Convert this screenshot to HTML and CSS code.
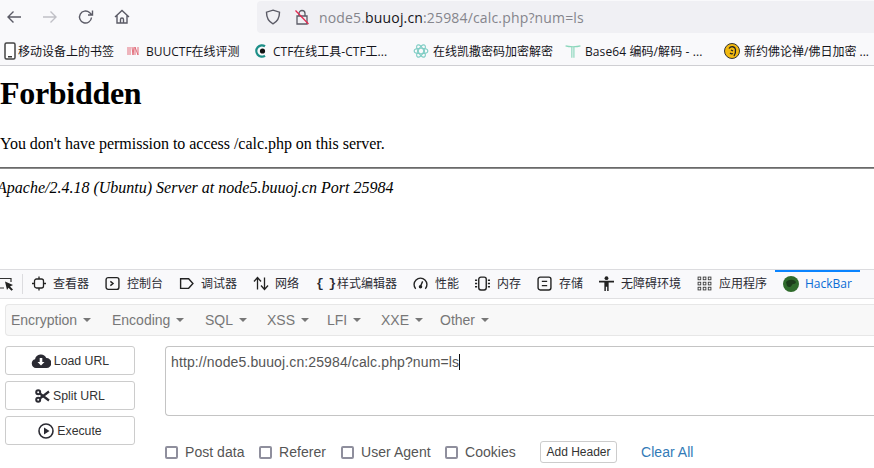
FILE: index.html
```html
<!DOCTYPE html>
<html lang="zh">
<head>
<meta charset="utf-8">
<title>403 Forbidden</title>
<link rel="stylesheet" href="styles.css">
</head>
<body>
<header class="chrome">
  <div class="toolbar">
    <svg class="nav-icon" viewBox="0 0 16 16"><path d="M15 8H2M7.500 2.500 2 8l5.500 5.500"/></svg>
    <svg class="nav-icon dim" viewBox="0 0 16 16"><path d="M1 8h13M8.500 2.500 14 8l-5.500 5.500"/></svg>
    <svg class="nav-icon" viewBox="0 0 16 16"><path d="M13.500 8.500a6 6 0 1 1-2-5L14 6M14.500 1.500V6H10"/></svg>
    <svg class="nav-icon" viewBox="0 0 16 16"><path d="M1 8 8 1.500 15 8M3 6.500V14h10V6.500M6.500 14v-3.500a1.500 1.500 0 0 1 3 0V14"/></svg>
    <div class="urlbar">
      <svg class="shield" viewBox="0 0 16 16"><path d="M8 1.200 14.500 3.200c0 5-1.500 9-6.500 11.600C3 12.200 1.500 8.200 1.500 3.200Z"/></svg>
      <svg class="lock" viewBox="0 0 16 16"><path class="lock-body" d="M3 7h10v8H3ZM5 7V4.500a3 3 0 0 1 6 0V7"/><path class="lock-slash" d="M1.500 1.500 14.500 15"/></svg>
      <span class="url"><span class="url-dim">node5.</span>buuoj.cn<span class="url-dim">:25984/calc.php?num=ls</span></span>
    </div>
  </div>
  <nav class="bookmarks">
    <span class="bm bm-first"><svg class="bm-ico" viewBox="0 0 12 18"><rect x="1" y="1" width="10" height="16" rx="1.500" class="phone"/><rect x="4" y="14" width="4" height="1.500" fill="#3a3a3a"/></svg>移动设备上的书签</span>
    <span class="bm bm-buu"><svg class="bm-ico-sm" viewBox="0 0 12 12"><path d="M1 2v8M3 2v8M5 2l1 8 1-8M8 2v8M11 2v8M8 2l3 8" class="buu"/></svg>BUUCTF在线评测</span>
    <span class="bm bm-ctf"><svg class="bm-ico-m" viewBox="0 0 14 14"><path d="M11 2.300a5.600 5.600 0 1 0 0 9.400" class="ctf"/><circle cx="8.500" cy="7" r="2.600" fill="#111"/></svg>CTF在线工具-CTF工...</span>
    <span class="bm bm-caesar"><svg class="bm-ico-w" viewBox="0 0 14 14"><g class="snow"><ellipse cx="7" cy="7" rx="6" ry="2.400"/><ellipse cx="7" cy="7" rx="6" ry="2.400" transform="rotate(60 7 7)"/><ellipse cx="7" cy="7" rx="6" ry="2.400" transform="rotate(120 7 7)"/></g></svg>在线凯撒密码加密解密</span>
    <span class="bm bm-b64"><svg class="bm-ico-w" viewBox="0 0 14 14"><path d="M.5 2.500c3 1 10 1 13 0M7.800 3v10M6 3.500V13" class="tee"/></svg><span class="b64-text">Base64 编码/解码 - ...</span></span>
    <span class="bm bm-fo"><svg class="bm-ico-l" viewBox="0 0 16 16"><circle cx="8" cy="8" r="7.500" fill="#f2b90f" stroke="#333" stroke-width="1"/><path d="M5 5.500c2-3 6-2 6.500 1 .3 2.500-.5 5-1.500 6.500M7 7l2 1M6 10c1 1 2 1 3 .5" fill="none" stroke="#222" stroke-width="1.300"/></svg>新约佛论禅/佛日加密 ...</span>
  </nav>
</header>

<main class="page">
  <h1>Forbidden</h1>
  <p>You don't have permission to access /calc.php on this server.</p>
  <hr>
  <address>Apache/2.4.18 (Ubuntu) Server at node5.buuoj.cn Port 25984</address>
</main>

<section class="devtools">
  <div class="tabs">
    <svg class="picker" viewBox="0 0 14 14"><path class="pick-box" d="M0 1.500h11V5M4 11H0"/><path d="M5 4.500 13 8l-3 1.500 3 3-1.500 1.300-3-3L7 13Z" fill="#222"/></svg>
    <span class="tab-sep"></span>
    <span class="tab tab-insp"><svg class="t-ico" viewBox="0 0 14 14"><rect x="2.500" y="2.500" width="9" height="9" rx="2"/><path d="M7 0v2.500M7 11.500V14M0 7h2.500M11.500 7H14"/></svg>查看器</span>
    <span class="tab tab-con"><svg class="t-ico" viewBox="0 0 14 14"><rect x="1" y="1.500" width="12" height="11" rx="2"/><path d="m5 5 2.500 2L5 9"/></svg>控制台</span>
    <span class="tab tab-dbg"><svg class="t-ico" viewBox="0 0 14 14"><path d="M1.500 2.500h7.500L13 7l-4 4.500H1.500Z"/></svg>调试器</span>
    <span class="tab tab-net"><svg class="t-ico wide" viewBox="0 0 16 14"><path d="M4.500 13V2M1 5l3.500-4L8 5M11.500 1v11M8 9l3.500 4 3.500-4"/></svg>网络</span>
    <span class="tab tab-style"><span class="braces">{ }</span>样式编辑器</span>
    <span class="tab tab-perf"><svg class="t-ico" viewBox="0 0 14 14"><path d="M2.500 12A6 6 0 1 1 11.500 12M7 9.500 9 5"/><circle cx="7" cy="10" r="1" fill="#222"/></svg>性能</span>
    <span class="tab tab-mem"><svg class="t-ico" viewBox="0 0 14 14"><rect x="3.500" y="1" width="7" height="12" rx="2"/><path d="M0 4h2M0 7h2M0 10h2M12 4h2M12 7h2M12 10h2"/></svg>内存</span>
    <span class="tab tab-store"><svg class="t-ico" viewBox="0 0 14 14"><rect x="1" y="1" width="12" height="12" rx="2"/><path d="M4.500 5h5M4.500 9h5"/></svg>存储</span>
    <span class="tab tab-a11y"><svg class="t-ico solid" viewBox="0 0 14 14"><circle cx="7" cy="2" r="1.800"/><path d="M0 4.500h14V6H9v8H7.600v-4H6.400v4H5V6H0Z"/></svg>无障碍环境</span>
    <span class="tab tab-app"><svg class="t-ico" viewBox="0 0 14 14"><g class="dots"><rect x="1" y="1" width="2.500" height="2.500"/><rect x="5.800" y="1" width="2.500" height="2.500"/><rect x="10.500" y="1" width="2.500" height="2.500"/><rect x="1" y="5.800" width="2.500" height="2.500"/><rect x="5.800" y="5.800" width="2.500" height="2.500"/><rect x="10.500" y="5.800" width="2.500" height="2.500"/><rect x="1" y="10.500" width="2.500" height="2.500"/><rect x="5.800" y="10.500" width="2.500" height="2.500"/><rect x="10.500" y="10.500" width="2.500" height="2.500"/></g></svg>应用程序</span>
    <span class="tab tab-hack"><svg class="hack-ico" viewBox="0 0 16 16"><circle cx="8" cy="8" r="8" fill="#2f6b2c"/><path d="M3 6c3-3 8-3 10 0-1 3-3 1-4 3s-3 3-5 1Z" fill="#1c3d1b"/></svg>HackBar</span>
  </div>
  <div class="menu">
    <span class="menu-item m-enc">Encryption<i class="caret"></i></span>
    <span class="menu-item m-encd">Encoding<i class="caret"></i></span>
    <span class="menu-item m-sql">SQL<i class="caret"></i></span>
    <span class="menu-item m-xss">XSS<i class="caret"></i></span>
    <span class="menu-item m-lfi">LFI<i class="caret"></i></span>
    <span class="menu-item m-xxe">XXE<i class="caret"></i></span>
    <span class="menu-item">Other<i class="caret"></i></span>
  </div>
  <div class="work">
    <div class="actions">
      <button class="act"><svg class="act-ico cloud" viewBox="0 0 20 14"><path d="M5 14a4.500 4.500 0 0 1-1-8.800A6 6 0 0 1 15.300 4 5 5 0 0 1 15.500 14Z" fill="#2b2b33"/><path d="M8.700 4h2.600v4h2.200L10 11.500 6.500 8h2.200Z" fill="#fff"/></svg>Load URL</button>
      <button class="act"><svg class="act-ico" viewBox="0 0 15 14"><g fill="none" stroke="#2b2b33" stroke-width="2"><circle cx="3.200" cy="3.200" r="2"/><circle cx="3.200" cy="10.800" r="2"/><path d="M4.800 4.500 14 11.500M4.800 9.500 14 2.500" stroke-width="2.200"/></g></svg>Split URL</button>
      <button class="act"><svg class="act-ico play" viewBox="0 0 16 16"><circle cx="8" cy="8" r="7" fill="none" stroke="#2b2b33" stroke-width="1.600"/><path d="M6 4.500v7l5.500-3.500Z" fill="#2b2b33"/></svg>Execute</button>
    </div>
    <div class="form">
      <div class="textbox">http://node5.buuoj.cn:25984/calc.php?num=ls<span class="cursor"></span></div>
      <div class="opts">
        <label class="opt opt-post"><i class="check"></i>Post data</label>
        <label class="opt opt-ref"><i class="check"></i>Referer</label>
        <label class="opt opt-ua"><i class="check"></i>User Agent</label>
        <label class="opt opt-ck"><i class="check"></i>Cookies</label>
        <button class="add">Add Header</button>
        <span class="clear">Clear All</span>
      </div>
    </div>
  </div>
</section>
</body>
</html>
```

FILE: styles.css
```css
* { box-sizing: border-box; }
html, body { margin: 0; padding: 0; }
body {
  width: 874px;
  height: 468px;
  overflow: hidden;
  background: #fff;
  color: #000;
  font-family: "Liberation Serif", serif;
}

/* browser chrome */
.chrome { height: 66px; background: #f9f9fb; border-bottom: 1px solid #cfcfd3; }
.toolbar { height: 33px; display: flex; align-items: center; padding-left: 6px; }
.nav-icon { width: 16px; height: 16px; margin-right: 20px; fill: none; stroke: #5b5b66; stroke-width: 1.400; flex: none; }
.nav-icon.dim { stroke: #c0c0c6; }
.urlbar {
  height: 32px;
  margin-left: 107px;
  align-self: flex-end;
  background: #f0f0f4;
  border-radius: 4px 0 0 4px;
  display: flex;
  align-items: center;
  padding-left: 8px;
  flex: 1;
  min-width: 0;
}
.shield { width: 16px; height: 16px; fill: none; stroke: #5b5b66; stroke-width: 1.400; margin-right: 13px; }
.lock { width: 16px; height: 16px; fill: none; margin-right: 9px; }
.lock-body { stroke: #5b5b66; stroke-width: 1.300; }
.lock-slash { stroke: #e22850; stroke-width: 1.300; }
.url { font: 14px "Open Sans", "Liberation Sans", sans-serif; letter-spacing: .16px; color: #15141a; white-space: nowrap; }
.url-dim { color: #85858c; }

.bookmarks {
  height: 32px;
  display: flex;
  align-items: center;
  padding: 3px 0 0 4px;
  font: 12px "Open Sans", "Noto Sans CJK SC", sans-serif;
  color: #15141a;
  white-space: nowrap;
}
.bm { display: flex; align-items: center; flex: none; }
.bm-ico { width: 12px; height: 18px; margin-right: 2px; }
.phone { fill: #fff; stroke: #444; stroke-width: 1.500; }
.bm-ico-sm { width: 12px; height: 12px; margin-right: 7px; }
.buu { fill: none; stroke: #e0606f; stroke-width: .9; }
.bm-ico-m { width: 14px; height: 14px; margin-right: 5px; }
.bm-ico-w { width: 16px; height: 16px; margin: 0 4px 0 -1px; }
.bm-ico-l { width: 16px; height: 16px; margin-right: 4px; }
.ctf { fill: none; stroke: #1d8f88; stroke-width: 2.300; }
.snow ellipse { fill: none; stroke: #7fcdc4; stroke-width: 1; }
.tee { fill: none; stroke: #8ad6bb; stroke-width: 1; }
.b64-text { letter-spacing: .1px; }
.bm-first { width: 123px; }
.bm-buu { width: 127px; }
.bm-ctf { width: 160px; }
.bm-caesar { width: 152px; }
.bm-b64 { width: 158px; }

/* page content */
.page { height: 203px; padding-top: 13px; overflow: hidden; }
h1 { margin: 0; font-size: 32px; line-height: 29px; font-weight: bold; letter-spacing: -.3px; }
.page p { margin: 0; padding-top: 26px; font-size: 16px; line-height: 19px; letter-spacing: -.03px; }
hr { margin: 14px 0 0; border: 0; height: 2px; background: linear-gradient(#6a6a6a 50%, #8c8c8c 50%); }
address { font-style: italic; font-size: 16px; line-height: 19px; margin: 9px 0 0 -3px; }

/* devtools */
.devtools { font-family: "Liberation Sans", "Noto Sans CJK SC", sans-serif; }
.tabs {
  height: 30px;
  background: #f9f9fb;
  border-top: 1px solid #dcdcdf;
  border-bottom: 1px solid #e0e0e2;
  display: flex;
  align-items: center;
  font: 12px/16px "Noto Sans CJK SC", sans-serif;
  color: #2b2b33;
  white-space: nowrap;
  overflow: hidden;
}
.picker { width: 14px; height: 14px; flex: none; }
.pick-box { fill: none; stroke: #333; stroke-width: 1.200; }
.tab-sep { width: 1px; height: 20px; background: #dcdcdf; margin: 0 9px 0 8px; flex: none; }
.tab { display: flex; align-items: center; flex: none; height: 28px; padding-bottom: 2px; }
.t-ico { width: 15px; height: 15px; margin-right: 7px; fill: none; stroke: #222; stroke-width: 1.300; flex: none; }
.t-ico.wide { width: 16px; margin-right: 6px; }
.t-ico.solid { fill: #222; stroke: none; }
.tab-insp .t-ico { width: 14px; }
.dots rect { fill: none; stroke: #333; stroke-width: .8; }
.braces { font: bold 13px "Liberation Mono", monospace; width: 22px; flex: none; letter-spacing: -1.500px; padding-left: 1px; }
.tab-insp { width: 73px; }
.tab-con { width: 74px; }
.tab-dbg { width: 74px; }
.tab-net { width: 62px; }
.tab-style { width: 98px; }
.tab-perf { width: 62px; }
.tab-mem { width: 62px; }
.tab-store { width: 62px; }
.tab-a11y { width: 98px; }
.tab-app { width: 78px; }
.tab-hack {
  color: #0a6cd6;
  width: 85px;
  padding-left: 8px;
  border-top: 2px solid #0a84ff;
  height: 28px;
  font-family: "Open Sans", sans-serif;
  font-size: 12px;
}
.hack-ico { width: 16px; height: 16px; margin-right: 6px; }

.menu {
  height: 32px;
  margin: 5px 0 0 5px;
  background: #f8f8f8;
  border: 1px solid #e7e7e7;
  border-right: 0;
  border-radius: 4px 0 0 4px;
  display: flex;
  align-items: center;
  padding-left: 5px;
  font-size: 14px;
  color: #777;
}
.menu-item { display: flex; align-items: center; flex: none; }
.caret {
  width: 0;
  height: 0;
  margin-left: 6px;
  border-top: 4px solid #777;
  border-left: 4px solid transparent;
  border-right: 4px solid transparent;
}
.m-enc { width: 101px; }
.m-encd { width: 93px; }
.m-sql { width: 62px; }
.m-xss { width: 60px; }
.m-lfi { width: 54px; }
.m-xxe { width: 59px; }

.work { display: flex; padding: 10px 0 0 5px; gap: 30px; }
.actions { display: flex; flex-direction: column; gap: 6px; width: 130px; flex: none; }
.act {
  height: 29px;
  padding: 0;
  background: #fff;
  border: 1px solid #ccc;
  border-radius: 3px;
  font: 12.300px "Liberation Sans", sans-serif;
  color: #333;
  display: flex;
  align-items: center;
  justify-content: center;
}
.act-ico { width: 15px; height: 14px; margin-right: 3px; flex: none; }
.act-ico.cloud { width: 20px; }
.act-ico.play { width: 16px; height: 16px; }
.form { flex: 1; min-width: 0; }
.textbox {
  height: 70px;
  border: 1px solid #c4c4c4;
  border-right: 0;
  border-radius: 4px 0 0 4px;
  padding: 7px 5px;
  font-size: 14px;
  letter-spacing: .12px;
  line-height: 16px;
  color: #555;
  white-space: nowrap;
}
.cursor { display: inline-block; width: 1px; height: 16px; background: #111; vertical-align: top; }
.opts { display: flex; align-items: center; margin-top: 25px; font-size: 14px; letter-spacing: .04px; color: #555; height: 22px; }
.opt { display: flex; align-items: center; flex: none; }
.check { width: 13px; height: 13px; border: 2px solid #8f8f9d; border-radius: 2px; margin-right: 7px; background: #fff; }
.opt-post { width: 94px; }
.opt-ref { width: 82px; }
.opt-ua { width: 104px; }
.opt-ck { width: 95px; }
.add {
  height: 22px;
  width: 77px;
  padding: 0;
  background: #fff;
  border: 1px solid #ccc;
  border-radius: 3px;
  font: 12px "Liberation Sans", sans-serif;
  color: #333;
  flex: none;
}
.clear { margin-left: 24px; color: #337ab7; }
```
